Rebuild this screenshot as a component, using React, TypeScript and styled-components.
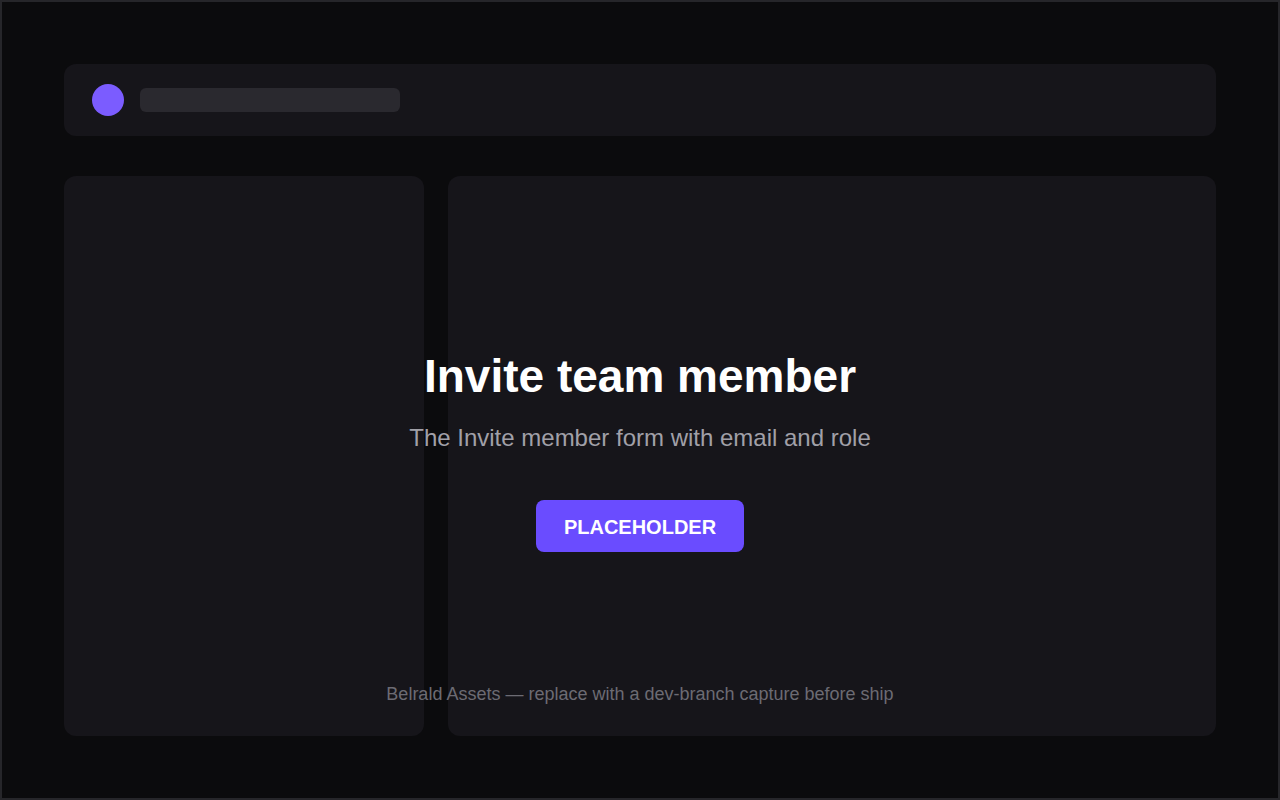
import React from "react";
import styled, { createGlobalStyle } from "styled-components";

const GlobalStyle = createGlobalStyle`
  * {
    box-sizing: border-box;
  }
  body {
    margin: 0;
    background: #0b0b0d;
    font-family: "Liberation Sans", Arial, sans-serif;
  }
`;

const Frame = styled.div`
  position: relative;
  width: 1280px;
  height: 800px;
  border: 2px solid #26262a;
  background: #0b0b0d;
  padding: 62px;
  display: flex;
  flex-direction: column;
  gap: 40px;
`;

const TopBar = styled.header`
  height: 72px;
  border-radius: 12px;
  background: #16151a;
  display: flex;
  align-items: center;
  gap: 16px;
  padding: 0 28px;
`;

const Dot = styled.div`
  width: 32px;
  height: 32px;
  border-radius: 50%;
  background: #7b5cff;
`;

const Skeleton = styled.div<{ $width: number }>`
  width: ${(p) => p.$width}px;
  height: 24px;
  border-radius: 6px;
  background: #2a292f;
`;

const Columns = styled.div`
  flex: 1;
  display: grid;
  grid-template-columns: 360px 1fr;
  gap: 24px;
`;

const Panel = styled.section`
  border-radius: 12px;
  background: #16151a;
`;

const Overlay = styled.div`
  position: absolute;
  inset: 0;
  display: flex;
  flex-direction: column;
  align-items: center;
  padding-top: 346px;
  text-align: center;
`;

const Title = styled.h1`
  margin: 0;
  font-size: 46px;
  line-height: 56px;
  font-weight: 700;
  color: #ffffff;
`;

const Subtitle = styled.p`
  margin: 19px 0 0;
  font-size: 24px;
  line-height: 30px;
  color: #a1a0a8;
`;

const Button = styled.button`
  margin-top: 47px;
  width: 208px;
  height: 52px;
  padding: 2px 0 0;
  border: none;
  border-radius: 8px;
  background: #6a4cff;
  color: #ffffff;
  font-family: inherit;
  font-size: 20px;
  font-weight: 700;
`;

const Footnote = styled.p`
  margin: 130px 0 0;
  font-size: 18px;
  line-height: 24px;
  color: #6c6b73;
`;

const App: React.FC = () => {
  return (
    <>
      <GlobalStyle />
      <Frame>
        <TopBar>
          <Dot />
          <Skeleton $width={260} />
        </TopBar>
        <Columns>
          <Panel />
          <Panel />
        </Columns>
        <Overlay>
          <Title>Invite team member</Title>
          <Subtitle>The Invite member form with email and role</Subtitle>
          <Button>PLACEHOLDER</Button>
          <Footnote>
            Belrald Assets — replace with a dev-branch capture before ship
          </Footnote>
        </Overlay>
      </Frame>
    </>
  );
};

export default App;
